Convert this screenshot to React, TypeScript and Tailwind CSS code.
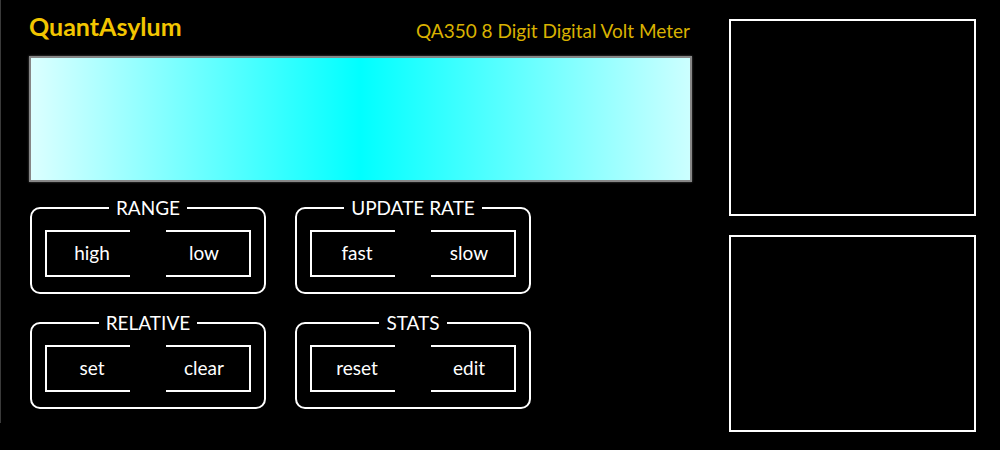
import React from "react";

function SplitButtons({ left, right }: { left: string; right: string }) {
  return (
    <div className="flex justify-between w-[206px] h-[47px] mt-[10px]">
      <div className="w-[85px] h-full border-2 border-r-0 border-white flex items-center">
        <span className="w-[90px] shrink-0 text-center text-white text-[19px] leading-none -mt-[2px]">{left}</span>
      </div>
      <div className="w-[85px] h-full border-2 border-l-0 border-white flex items-center">
        <span className="w-[90px] shrink-0 -ml-[7px] text-center text-white text-[19px] leading-none -mt-[2px]">{right}</span>
      </div>
    </div>
  );
}

function Group({ title, left, right }: { title: string; left: string; right: string }) {
  return (
    <fieldset className="border-2 border-white rounded-[10px] px-[13px] pb-[15px] w-[236px]">
      <legend className="mx-auto px-[7px] text-white text-[19px] leading-[24px]">{title}</legend>
      <SplitButtons left={left} right={right} />
    </fieldset>
  );
}

export default function App() {
  return (
    <div
      className="w-[1000px] h-[450px] bg-black flex items-start overflow-hidden"
      style={{ fontFamily: "Lato, 'Open Sans', sans-serif" }}
    >
      <div className="w-px h-[423px] bg-[#3a3a3a] shrink-0" />
      <div className="ml-[28px] w-[663px] flex flex-col">
        <div className="flex justify-between items-end h-[44px]">
          <span className="text-[#f2c500] font-bold text-[25px] leading-none mb-[5px]">QuantAsylum</span>
          <span className="text-[#d9b200] text-[19px] leading-none mb-[4px] mr-[2px]">QA350 8 Digit Digital Volt Meter</span>
        </div>
        <div className="mt-[12px] h-[126px] border-2 border-[#868686] bg-[linear-gradient(to_right,#dcffff,#00ffff_50%,#ccffff)] shadow-[0_0_2px_#555]" />
        <div className="grid grid-cols-[236px_236px] gap-x-[29px] gap-y-[17px] mt-[14px] ml-[1px]">
          <Group title="RANGE" left="high" right="low" />
          <Group title="UPDATE RATE" left="fast" right="slow" />
          <Group title="RELATIVE" left="set" right="clear" />
          <Group title="STATS" left="reset" right="edit" />
        </div>
      </div>
      <div className="ml-[37px] mt-[19px] flex flex-col gap-[19px]">
        <div className="w-[247px] h-[197px] border-2 border-white" />
        <div className="w-[247px] h-[197px] border-2 border-white" />
      </div>
    </div>
  );
}
